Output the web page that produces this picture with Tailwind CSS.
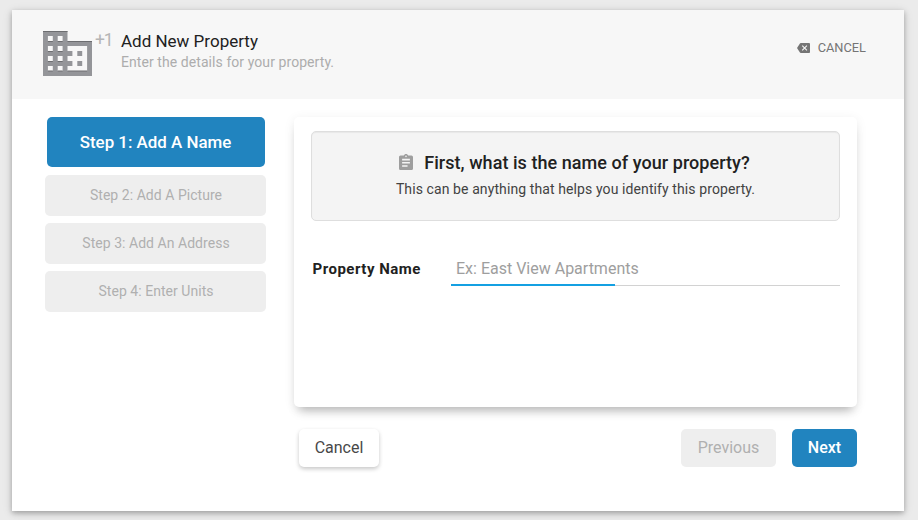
<!DOCTYPE html>
<html lang="en">
<head>
<meta charset="utf-8">
<title>Add New Property</title>
<script src="https://cdn.jsdelivr.net/npm/@tailwindcss/browser@4"></script>
</head>
<body class="h-[520px] overflow-hidden bg-[#ebebeb] pt-[10px] pl-3 font-['Roboto',sans-serif] text-[#212121]">
<main class="h-[501px] w-[892px] bg-white shadow-[0_2px_5px_rgba(0,0,0,0.26),0_2px_10px_rgba(0,0,0,0.12)]">
  <header class="flex h-[89px] bg-[#f7f7f7] pl-[31px] pr-[38px]">
    <svg class="mt-[21px] h-[45px] w-[49px] shrink-0" viewBox="2 3 20 18" preserveAspectRatio="none" fill="#949599"><path d="M12 7V3H2v18h20V7H12zM6 19H4v-2h2v2zm0-4H4v-2h2v2zm0-4H4V9h2v2zm0-4H4V5h2v2zm4 12H8v-2h2v2zm0-4H8v-2h2v2zm0-4H8V9h2v2zm0-4H8V5h2v2zm10 12h-8v-2h2v-2h-2v-2h2v-2h-2V9h8v10zm-2-8h-2v2h2v-2zm0 4h-2v2h2v-2z"/><path d="M2 3h10v.4H2zM12 7h10v.4H12zM4 7h2v.4H4zM8 7h2v.4H8zM4 11h2v.4H4zM8 11h2v.4H8zM4 15h2v.4H4zM8 15h2v.4H8zM4 18.8h2v.4H4zM8 18.8h2v.4H8zM12 18.8h8v.4h-8z" fill="#6c6d70"/></svg>
    <span class="mt-[20px] ml-[3px] w-[26px] text-[17.5px] leading-5 tracking-[-1.2px] text-[#b5b5b5]">+1</span>
    <div class="pt-[21px]">
      <h1 class="text-[17px] leading-5">Add New Property</h1>
      <p class="text-[14px] leading-[22px] tracking-[0.07px] text-[#adadad]">Enter the details for your property.</p>
    </div>
    <button class="ml-auto mt-[28px] flex h-5 items-center text-[12.8px] text-[#757575]">
      <svg class="mr-2 h-[10px] w-[13px]" viewBox="0 3 24 18" preserveAspectRatio="none" fill="#757575"><path d="M22 3H7c-.69 0-1.23.35-1.59.88L0 12l5.41 8.11c.36.53.9.89 1.59.89h15c1.1 0 2-.9 2-2V5c0-1.1-.9-2-2-2zm-3 12.59L17.59 17 14 13.41 10.41 17 9 15.59 12.59 12 9 8.41 10.41 7 14 10.59 17.59 7 19 8.41 15.41 12 19 15.59z"/></svg>CANCEL
    </button>
  </header>
  <div class="flex pl-[33px] pt-[18px]">
    <nav class="flex w-[221px] flex-col gap-[7px] text-[14px] text-[#b0b0b0]">
      <button class="mx-[2px] mb-px mr-px h-[50px] rounded-[5px] bg-[#2184bf] pt-px pr-px text-[16.9px] font-medium text-white">Step 1: Add A Name</button>
      <button class="h-[41px] rounded-[5px] bg-[#eeeeee] pl-px tracking-[0.04px]">Step 2: Add A Picture</button>
      <button class="h-[41px] rounded-[5px] bg-[#eeeeee] pl-px tracking-[0.04px]">Step 3: Add An Address</button>
      <button class="h-[41px] rounded-[5px] bg-[#eeeeee] pl-px tracking-[0.04px]">Step 4: Enter Units</button>
    </nav>
    <div class="ml-7 w-[563px]">
      <section class="h-[290px] rounded-[5px] bg-white px-[17px] pt-[14px] shadow-[0_8px_10px_-5px_rgba(0,0,0,0.28),0_2px_12px_rgba(0,0,0,0.07)]">
        <div class="h-[90px] rounded-[5px] border border-[#dedede] bg-[#f4f4f4] pt-[19px] text-center shadow-[inset_0_1px_1px_rgba(0,0,0,0.05)]">
          <h2 class="flex h-[22px] items-center justify-center pr-[2px] text-[18px] font-medium tracking-[0.05px]">
            <svg class="mr-[11px] h-4 w-[14px]" viewBox="3 1 18 20" preserveAspectRatio="none" fill="#9e9e9e"><path d="M19 3h-4.180C14.400 1.840 13.300 1 12 1c-1.300 0-2.400.84-2.820 2H5c-1.100 0-2 .9-2 2v14c0 1.100.9 2 2 2h14c1.100 0 2-.9 2-2V5c0-1.100-.9-2-2-2zm-7 0c.55 0 1 .45 1 1s-.45 1-1 1-1-.45-1-1 .45-1 1-1zm2 14H7v-2h7v2zm3-4H7v-2h10v2zm0-4H7V7h10v2z"/></svg>First, what is the name of your property?
          </h2>
          <p class="mt-[6px] text-[14px] leading-5 tracking-[0.1px] text-[#424242]">This can be anything that helps you identify this property.</p>
        </div>
        <label class="mt-[30px] flex h-[35px]">
          <span class="w-[140px] pl-[1.5px] pt-2 text-[15px] font-bold leading-5 tracking-[0.5px]">Property Name</span>
          <span class="relative flex-1 border-b border-[#d2d2d2]">
            <input class="h-[34px] w-full pl-[5px] text-[16px] outline-none placeholder:text-[#9e9e9e]" placeholder="Ex: East View Apartments">
            <span class="absolute -bottom-px left-0 h-[2px] w-[164px] bg-[#14a0e2]"></span>
          </span>
        </label>
      </section>
      <footer class="mt-[22px] flex h-[38px] pl-[5px] text-[16px]">
        <button class="w-20 rounded-[5px] bg-white text-[#484848] shadow-[0_2px_4px_rgba(0,0,0,0.22)]">Cancel</button>
        <button class="ml-auto w-[95px] rounded-[5px] bg-[#eeeeee] text-[#b0b0b0]">Previous</button>
        <button class="ml-4 w-[65px] rounded-[5px] bg-[#2184bf] font-medium text-white">Next</button>
      </footer>
    </div>
  </div>
</main>
</body>
</html>
